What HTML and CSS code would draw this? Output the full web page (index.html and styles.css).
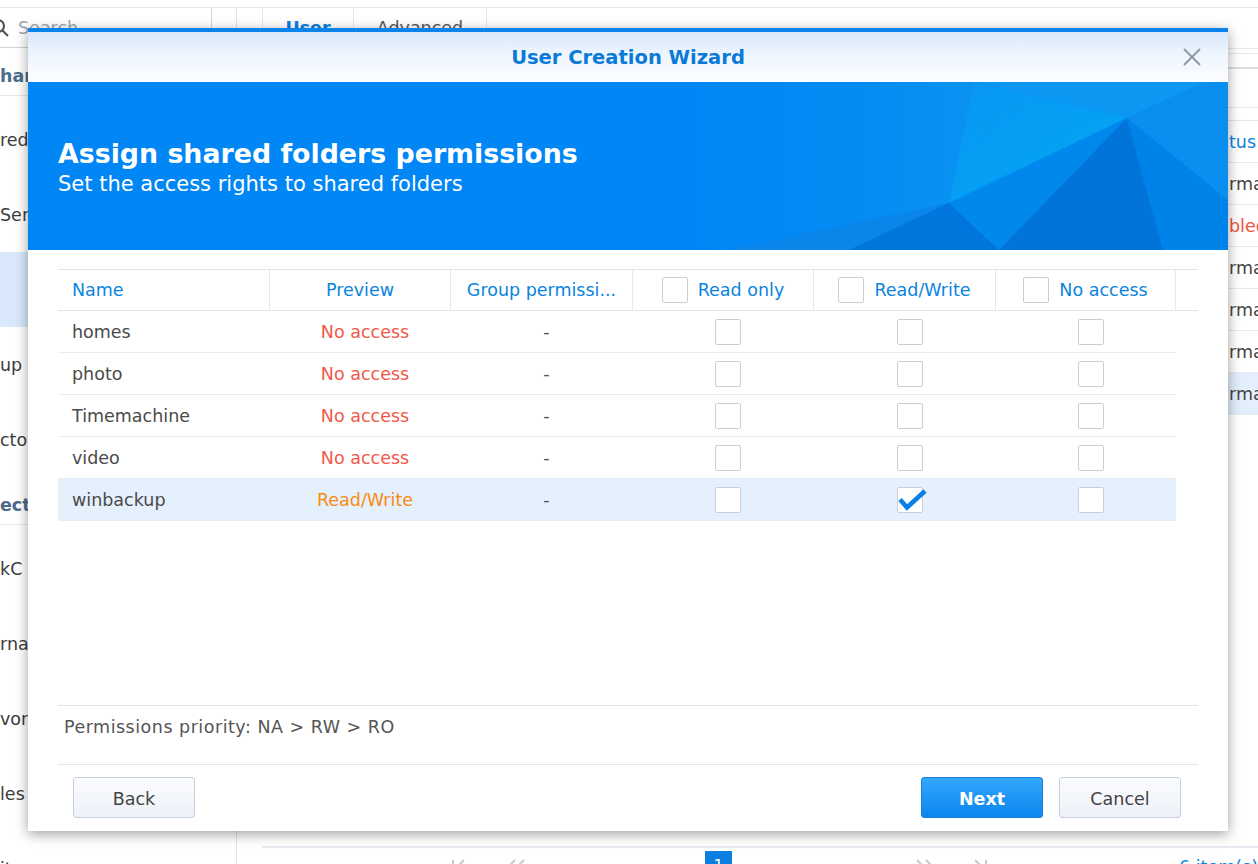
FILE: index.html
```html
<!DOCTYPE html>
<html>
<head>
<meta charset="utf-8">
<title>User Creation Wizard</title>
<link rel="stylesheet" href="styles.css">
</head>
<body>
<div class="app">
  <aside class="sidebar">
    <div class="search">
      <svg class="search-icon" width="18" height="18" viewBox="0 0 18 18"><circle cx="7" cy="7" r="6" fill="none" stroke="#555" stroke-width="2.2"/><line x1="11.5" y1="11.5" x2="17" y2="17" stroke="#555" stroke-width="2.2"/></svg>
      <span>Search</span>
    </div>
    <div class="nav-head">har</div>
    <div class="nav-list">
      <div class="nav-item">red</div>
      <div class="nav-item">Ser</div>
      <div class="nav-item selected"></div>
      <div class="nav-item">up</div>
      <div class="nav-item">cto</div>
    </div>
    <div class="nav-head">ecti</div>
    <div class="nav-list">
      <div class="nav-item">kC</div>
      <div class="nav-item">rna</div>
      <div class="nav-item">vor</div>
      <div class="nav-item">les</div>
      <div class="nav-item">it</div>
    </div>
  </aside>
  <main class="main">
    <div class="tabs">
      <div class="tab active">User</div>
      <div class="tab">Advanced</div>
    </div>
    <div class="toolbar">
      <div class="tool-box"></div>
    </div>
    <div class="grid">
      <div class="grid-row grid-header"><span class="status-cell">tus</span></div>
      <div class="grid-row"><span class="status-cell">rmal</span></div>
      <div class="grid-row"><span class="status-cell red">bled</span></div>
      <div class="grid-row"><span class="status-cell">rmal</span></div>
      <div class="grid-row"><span class="status-cell">rmal</span></div>
      <div class="grid-row"><span class="status-cell">rmal</span></div>
      <div class="grid-row sel"><span class="status-cell">rmal</span></div>
    </div>
    <div class="pager">
      <svg class="pg first" width="20" height="16" viewBox="0 0 20 16"><line x1="3" y1="1" x2="3" y2="15" stroke="#c3cad3" stroke-width="2"/><polyline points="14,1 7,8 14,15" fill="none" stroke="#c3cad3" stroke-width="2"/></svg>
      <svg class="pg prev" width="22" height="16" viewBox="0 0 22 16"><polyline points="10,1 3,8 10,15" fill="none" stroke="#c3cad3" stroke-width="2"/><polyline points="19,1 12,8 19,15" fill="none" stroke="#c3cad3" stroke-width="2"/></svg>
      <div class="page-box">1</div>
      <svg class="pg next" width="22" height="16" viewBox="0 0 22 16"><polyline points="3,1 10,8 3,15" fill="none" stroke="#c3cad3" stroke-width="2"/><polyline points="12,1 19,8 12,15" fill="none" stroke="#c3cad3" stroke-width="2"/></svg>
      <svg class="pg last" width="20" height="16" viewBox="0 0 20 16"><polyline points="6,1 13,8 6,15" fill="none" stroke="#c3cad3" stroke-width="2"/><line x1="17" y1="1" x2="17" y2="15" stroke="#c3cad3" stroke-width="2"/></svg>
      <span class="items">6 item(s)</span>
    </div>
  </main>
</div>

<div class="modal">
  <div class="modal-head">
    <span class="modal-title">User Creation Wizard</span>
    <svg class="close" width="18" height="18" viewBox="0 0 18 18"><line x1="1" y1="1" x2="17" y2="17" stroke="#8a96a3" stroke-width="1.8"/><line x1="17" y1="1" x2="1" y2="17" stroke="#8a96a3" stroke-width="1.8"/></svg>
  </div>
  <div class="banner">
    <svg class="banner-art" width="1200" height="168" viewBox="0 0 1200 168" preserveAspectRatio="none">
      <defs>
        <linearGradient id="glow" x1="0" y1="0" x2="1" y2="1">
          <stop offset="0" stop-color="#0a96f3"/>
          <stop offset="1" stop-color="#00a8f6"/>
        </linearGradient>
        <linearGradient id="leftfade" x1="0" y1="0" x2="1" y2="0">
          <stop offset="0" stop-color="#0086f5" stop-opacity="0"/>
          <stop offset="1" stop-color="#0a92f2" stop-opacity="1"/>
        </linearGradient>
      </defs>
      <polygon points="560,0 946,0 921,121 700,168 600,168" fill="url(#leftfade)"/>
      <polygon points="946,0 1099,36 921,121" fill="url(#glow)"/>
      <polygon points="946,0 1177,0 1099,36" fill="#0c98f2"/>
      <polygon points="700,168 921,121 821,168" fill="#0a85ea"/>
      <polygon points="821,168 921,121 971,168" fill="#0075dc"/>
      <polygon points="921,121 1099,36 971,168" fill="#0088ec"/>
      <polygon points="971,168 1099,36 1135,168" fill="#0074d9"/>
      <polygon points="1099,36 1200,118 1200,168 1135,168" fill="#0083e8"/>
      <polygon points="1099,36 1177,0 1200,0 1200,118" fill="#0a8ff0"/>
    </svg>
    <div class="banner-title">Assign shared folders permissions</div>
    <div class="banner-sub">Set the access rights to shared folders</div>
  </div>
  <div class="modal-body">
    <div class="t-head">
      <div class="th th-name">Name</div>
      <div class="th">Preview</div>
      <div class="th">Group permissi...</div>
      <div class="th th-cb"><span class="cb"></span><span>Read only</span></div>
      <div class="th th-cb"><span class="cb"></span><span>Read/Write</span></div>
      <div class="th th-cb"><span class="cb"></span><span>No access</span></div>
      <div class="th th-fill"></div>
    </div>
    <div class="t-row">
      <div class="td td-name">homes</div>
      <div class="td na">No access</div>
      <div class="td">-</div>
      <div class="td"><span class="cb"></span></div>
      <div class="td"><span class="cb"></span></div>
      <div class="td"><span class="cb"></span></div>
    </div>
    <div class="t-row">
      <div class="td td-name">photo</div>
      <div class="td na">No access</div>
      <div class="td">-</div>
      <div class="td"><span class="cb"></span></div>
      <div class="td"><span class="cb"></span></div>
      <div class="td"><span class="cb"></span></div>
    </div>
    <div class="t-row">
      <div class="td td-name">Timemachine</div>
      <div class="td na">No access</div>
      <div class="td">-</div>
      <div class="td"><span class="cb"></span></div>
      <div class="td"><span class="cb"></span></div>
      <div class="td"><span class="cb"></span></div>
    </div>
    <div class="t-row">
      <div class="td td-name">video</div>
      <div class="td na">No access</div>
      <div class="td">-</div>
      <div class="td"><span class="cb"></span></div>
      <div class="td"><span class="cb"></span></div>
      <div class="td"><span class="cb"></span></div>
    </div>
    <div class="t-row selected">
      <div class="td td-name">winbackup</div>
      <div class="td rw">Read/Write</div>
      <div class="td">-</div>
      <div class="td"><span class="cb"></span></div>
      <div class="td"><span class="cb checked"><svg class="tick" width="30" height="26" viewBox="0 0 30 26"><path d="M3 12.5 L10 20.5 L28 4" fill="none" stroke="#0a7fe6" stroke-width="4.6" stroke-linecap="butt" stroke-linejoin="miter"/></svg></span></div>
      <div class="td"><span class="cb"></span></div>
    </div>
  </div>
  <div class="modal-note">Permissions priority: NA &gt; RW &gt; RO</div>
  <div class="modal-foot">
    <button class="btn">Back</button>
    <div class="foot-right">
      <button class="btn primary">Next</button>
      <button class="btn">Cancel</button>
    </div>
  </div>
</div>
</body>
</html>
```
FILE: styles.css
```css
html, body {
  margin: 0;
  padding: 0;
}
body {
  width: 1258px;
  height: 864px;
  overflow: hidden;
  position: relative;
  background: #ffffff;
  font-family: "DejaVu Sans", Verdana, sans-serif;
  font-size: 17.5px;
  color: #444;
}

/* ---------- background application ---------- */
.app {
  display: flex;
  margin-top: 7px;
  border-top: 1px solid #e1e6ec;
  height: 878px;
}
.sidebar {
  width: 236px;
  flex: none;
  border-right: 1px solid #dce2e9;
  color: #3c3c3c;
}
.search {
  width: 212px;
  height: 40px;
  box-sizing: border-box;
  border: 1px solid #ccd4dd;
  border-left: none;
  border-top: none;
  display: flex;
  align-items: center;
  gap: 9px;
  color: #a0a7b0;
}
.search-icon {
  margin-left: -9px;
  flex: none;
}
.nav-head {
  height: 48px;
  box-sizing: border-box;
  padding-top: 18px;
  line-height: 21px;
  border-bottom: 1px solid #e3e8ee;
  font-weight: bold;
  color: #4d6c8a;
  white-space: nowrap;
  overflow: hidden;
}
.nav-list {
  padding-top: 6px;
}
.nav-item {
  height: 75px;
  display: flex;
  align-items: center;
  white-space: nowrap;
  overflow: hidden;
}
.nav-item.selected {
  background: #d9e9fb;
}

.main {
  flex: 1;
  display: flex;
  flex-direction: column;
  min-width: 0;
}
.tabs {
  display: flex;
  height: 40px;
  padding-left: 25px;
  border-bottom: 1px solid #e3e8ee;
}
.tab {
  border-left: 1px solid #e1e6ec;
  display: flex;
  align-items: center;
  justify-content: center;
  color: #555;
}
.tab:first-child {
  width: 90px;
}
.tab:last-child {
  width: 132px;
  border-right: 1px solid #e1e6ec;
}
.tab.active {
  color: #0a7fdc;
  font-weight: bold;
}
.toolbar {
  height: 58px;
  border-bottom: 1px solid #e3e8ee;
  display: flex;
  justify-content: flex-end;
  align-items: flex-start;
}
.tool-box {
  margin-top: 4px;
  width: 200px;
  height: 13px;
  border-top: 1px solid #e3e8ee;
  border-bottom: 2px solid #d9dee5;
}
.grid {
  margin-top: 12px;
  margin-left: 25px;
  border-top: 1px solid #e1e6ec;
}
.grid-row {
  height: 42px;
  box-sizing: border-box;
  border-bottom: 1px solid #e6eaf0;
  display: flex;
  align-items: center;
  justify-content: flex-end;
}
.grid-header {
  color: #0a84e0;
}
.grid-row.sel {
  background: #e3effc;
}
.status-cell {
  width: 29px;
  white-space: nowrap;
  overflow: hidden;
}
.status-cell.red {
  color: #f0533f;
}
.pager {
  margin-top: auto;
  margin-left: 25px;
  height: 40px;
  border-top: 2px solid #e6eaf0;
  display: flex;
  align-items: flex-start;
  padding-top: 3px;
  box-sizing: border-box;
}
.pg {
  flex: none;
  margin-top: 8px;
}
.pg.first { margin-left: 188px; }
.pg.prev { margin-left: 35px; }
.pg.next { margin-left: 182px; }
.pg.last { margin-left: 33px; }
.page-box {
  margin-left: 178px;
  width: 41px;
  height: 36px;
  background: #0a7fe0;
  color: #fff;
  text-align: center;
  line-height: 30px;
  font-size: 15px;
}
.items {
  margin-left: 190px;
  color: #0a84e0;
  white-space: nowrap;
  margin-top: 6px;
}

/* ---------- modal ---------- */
.modal {
  position: absolute;
  left: 28px;
  top: 28px;
  width: 1200px;
  height: 803px;
  box-sizing: border-box;
  border-top: 4px solid #0a84ea;
  background: #fff;
  box-shadow: 0 3px 12px rgba(0, 0, 0, 0.38);
  display: flex;
  flex-direction: column;
}
.modal-head {
  height: 50px;
  flex: none;
  position: relative;
  display: flex;
  align-items: center;
  justify-content: center;
  background: linear-gradient(#d8e8fb 0%, #eef5fe 45%, #fcfdff 100%);
}
.modal-title {
  font-weight: bold;
  font-size: 19.5px;
  color: #0a7ad9;
}
.close {
  position: absolute;
  right: 27px;
  top: 16px;
}
.banner {
  height: 168px;
  flex: none;
  position: relative;
  background: #0086f5;
  color: #fff;
  padding: 56px 30px 0;
  box-sizing: border-box;
  overflow: hidden;
}
.banner-art {
  position: absolute;
  left: 0;
  top: 0;
}
.banner-title {
  position: relative;
  font-weight: bold;
  font-size: 26.8px;
  line-height: 32px;
}
.banner-sub {
  position: relative;
  margin-top: 1px;
  font-size: 21px;
  line-height: 26px;
}
.modal-body {
  flex: 1;
  padding: 19px 30px 0;
}
.t-head {
  display: grid;
  grid-template-columns: 212px 181px 182px 181px 182px 180px 22px;
  height: 42px;
  box-sizing: border-box;
  border-top: 1px solid #dfe5ed;
  border-bottom: 1px solid #e1e6ed;
  color: #0a84e0;
}
.th {
  display: flex;
  align-items: center;
  justify-content: center;
  border-right: 1px solid #e3e8ef;
  white-space: nowrap;
}
.th-name {
  justify-content: flex-start;
  padding-left: 14px;
}
.th-cb {
  gap: 10px;
}
.th-fill {
  border-right: none;
}
.t-row {
  display: grid;
  grid-template-columns: 212px 181px 182px 181px 182px 180px;
  width: 1118px;
  height: 42px;
  box-sizing: border-box;
  border-bottom: 1px solid #e8ecf2;
}
.t-row.selected {
  background: #e4f0fc;
}
.td {
  display: flex;
  align-items: center;
  justify-content: center;
  padding-left: 9px;
  color: #555;
  white-space: nowrap;
}
.td-name {
  justify-content: flex-start;
  padding-left: 14px;
  color: #4a4a4a;
}
.td.na {
  color: #f2584a;
}
.td.rw {
  color: #f98b12;
}
.cb {
  width: 26px;
  height: 26px;
  box-sizing: border-box;
  border: 1px solid #c8cfd8;
  border-radius: 2px;
  background: #fff;
  flex: none;
  position: relative;
}
.tick {
  position: absolute;
  left: -1px;
  top: -1px;
  overflow: visible;
}
.modal-note {
  flex: none;
  margin: 0 30px;
  height: 60px;
  box-sizing: border-box;
  border-top: 1px solid #e1e6ed;
  border-bottom: 1px solid #e1e6ed;
  padding: 11px 0 0 6px;
  line-height: 21px;
  letter-spacing: 0.5px;
  color: #555;
}
.modal-foot {
  flex: none;
  height: 66px;
  box-sizing: border-box;
  padding: 12px 47px 0 45px;
  display: flex;
  justify-content: space-between;
  align-items: flex-start;
}
.foot-right {
  display: flex;
  gap: 16px;
}
.btn {
  width: 122px;
  height: 41px;
  box-sizing: border-box;
  border: 1px solid #c6cfdb;
  border-radius: 3px;
  background: linear-gradient(#fbfcfe, #edf1f8);
  font-family: "DejaVu Sans", Verdana, sans-serif;
  font-size: 17.5px;
  color: #444;
  padding: 3px 0 0;
}
.btn.primary {
  border-color: #1a7fd8;
  background: linear-gradient(#33a7fc, #0b86ee);
  color: #fff;
  font-weight: bold;
}
```
